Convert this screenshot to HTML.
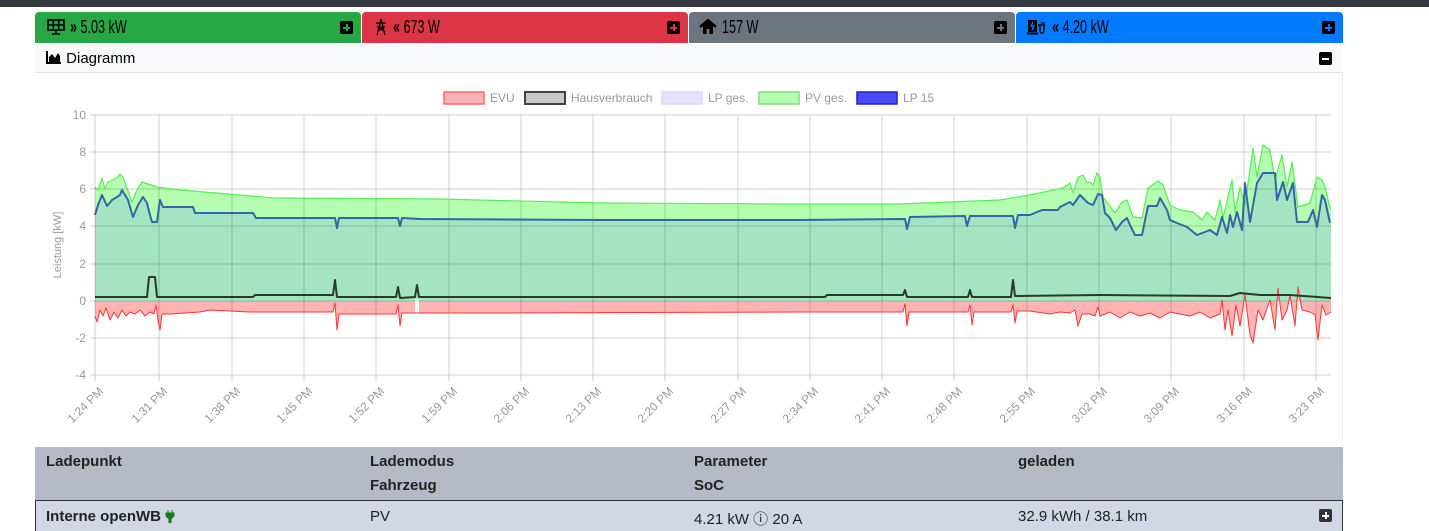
<!DOCTYPE html>
<html><head><meta charset="utf-8"><style>
*{box-sizing:border-box;margin:0;padding:0}
body{width:1429px;height:531px;overflow:hidden;background:#fff;font-family:"Liberation Sans",sans-serif;position:relative}
.top{position:absolute;left:0;top:0;width:1429px;height:7px;background:#343a40}
.btn{position:absolute;top:12px;height:31px;border-radius:4px 4px 0 0;font-size:18px;color:#000;line-height:31px;padding-left:12px}
.btn .tx{display:inline-block;transform:scaleX(0.7);transform-origin:0 50%;white-space:nowrap}
.btn .pl{position:absolute;right:8px;top:9px;width:13px;height:13px;background:#000;border-radius:2px}
.pl:before{content:"";position:absolute;left:3px;top:5.5px;width:7px;height:2px;background:var(--c)}
.pl:after{content:"";position:absolute;left:5.5px;top:3px;width:2px;height:7px;background:var(--c)}
.hdr{position:absolute;left:35px;top:44px;width:1308px;height:29px;background:#f8f9fa;border-bottom:1px solid #dee2e6;font-size:15px;line-height:29px;padding-left:11px}
.card{position:absolute;left:35px;top:73px;width:1308px;height:368px;border-right:1px solid #eee}
.th{position:absolute;left:35px;top:447px;width:1308px;height:53px;background:#b6bac6}
.tr{position:absolute;left:35px;top:500px;width:1308px;height:31px;background:#d1d7e5;border:1px solid #333;border-bottom:none}
.t{position:absolute;font-size:15px;color:#222}
.b{font-weight:bold}
</style></head><body>
<div class="top"></div>
<div class="btn" style="left:35px;width:326px;background:#28a745">
<svg width="18" height="16" viewBox="0 0 18 16" style="vertical-align:-2px"><rect x="1" y="1" width="16" height="10" fill="none" stroke="#000" stroke-width="1.6"/><path d="M1 6H17M6.3 1V11M11.7 1V11M9 11V14M5 15H13" stroke="#000" stroke-width="1.6"/></svg> <span class="tx"><b>»</b> 5.03 kW</span><span class="pl" style="--c:#28a745"></span></div>
<div class="btn" style="left:362px;width:326px;background:#dc3545">
<svg width="14" height="18" viewBox="0 0 14 18" style="vertical-align:-3px"><path d="M7 1L3 17M7 1L11 17M2 5H12M3 9H11M7 1V4M4 13L10 9M10 13L4 9" stroke="#000" stroke-width="1.2" fill="none"/></svg> <span class="tx"><b>«</b> 673 W</span><span class="pl" style="--c:#dc3545"></span></div>
<div class="btn" style="left:689px;width:326px;background:#6c757d;padding-left:10px">
<svg width="18" height="16" viewBox="0 0 18 16" style="vertical-align:-2px"><path d="M1 8L9 1L17 8" stroke="#000" stroke-width="2.4" fill="none"/><path d="M4 6L9 2L14 6V15H10.5V10H7.5V15H4Z" fill="#000"/></svg> <span class="tx">157 W</span><span class="pl" style="--c:#6c757d"></span></div>
<div class="btn" style="left:1016px;width:327px;background:#007bff;padding-left:11px">
<svg width="20" height="16" viewBox="0 0 20 16" style="vertical-align:-2px"><rect x="1" y="1" width="9" height="12" fill="#000"/><rect x="0" y="13.5" width="11" height="2" fill="#000"/><path d="M6 3L4 7H7L5 11" stroke="#007bff" stroke-width="1.4" fill="none"/><path d="M11 6H13V12Q13 14 15 14Q17 14 17 11V6M15 3V6M17 3V6M14 6H18" stroke="#000" stroke-width="1.4" fill="none"/></svg> <span class="tx"><b>«</b> 4.20 kW</span><span class="pl" style="--c:#007bff"></span></div>
<div class="hdr"><svg width="16" height="14" viewBox="0 0 16 14" style="vertical-align:-1px"><path d="M1 1V13H15" stroke="#000" stroke-width="2" fill="none"/><path d="M3 12V7L6 4L9 8L12 3L14 6V12Z" fill="#000"/></svg> Diagramm
<span style="position:absolute;right:11px;top:8px;width:13px;height:13px;background:#000;border-radius:2px"><span style="position:absolute;left:3px;top:5.5px;width:7px;height:2px;background:#fff"></span></span></div>
<div class="card"></div>
<svg style="position:absolute;left:0;top:0" width="1429" height="445" font-family="Liberation Sans, sans-serif">
<g font-size="12" fill="#999">
<rect x="444" y="92" width="40" height="12" fill="#ffb3b3" stroke="#ff6666" stroke-width="1.5"/><text x="490" y="102">EVU</text>
<rect x="525" y="92" width="40" height="12" fill="#c8c8c8" stroke="#444" stroke-width="2"/><text x="571" y="102">Hausverbrauch</text>
<rect x="662" y="92" width="40" height="12" fill="#e3e3fb" stroke="#d8d8f5" stroke-width="1.5"/><text x="708" y="102">LP ges.</text>
<rect x="759" y="92" width="40" height="12" fill="#b5fdb0" stroke="#7be07b" stroke-width="1.5"/><text x="805" y="102">PV ges.</text>
<rect x="857" y="92" width="40" height="12" fill="#4a4af5" stroke="#2020d0" stroke-width="1.5"/><text x="903" y="102">LP 15</text>
</g>
<polygon fill="#b5fdb0" points="95,301 95,187 98,190 102,178 105,189 108,182 117,178 120,174 123,177 132,202 137,190 142,182 157,187 180,190 240,195 273,198 440,199 600,203 800,204 900,204 1000,200 1030,195 1063,188 1070,183 1073,193 1078,177 1083,175 1087,183 1090,182 1093,185 1097,173 1100,177 1103,197 1115,213 1122,202 1127,200 1133,217 1142,218 1148,188 1158,181 1163,185 1170,205 1180,210 1193,212 1202,220 1207,212 1215,220 1220,200 1223,218 1232,180 1235,212 1240,187 1245,205 1253,148 1257,177 1263,145 1270,150 1275,180 1282,155 1287,187 1292,162 1298,207 1310,203 1317,177 1322,180 1325,187 1330,208 1331,208 1331,301"/>
<polygon fill="#a4e4c2" points="95,301 95,215 98,205 102,195 107,206 112,200 120,195 122,190 128,200 133,217 138,205 143,197 147,203 150,215 152,222 157,222 160,200 163,207 193,207 195,213 253,213 256,218 335,218 337,228 339,218 398,218 400,226 402,218 420,219 600,220 800,220 905,219 907,229 910,217 965,216 967,226 970,216 1013,216 1015,228 1018,215 1030,215 1042,210 1058,210 1060,207 1070,202 1073,205 1080,195 1083,198 1088,203 1093,205 1098,194 1102,195 1105,213 1110,218 1116,230 1122,222 1127,218 1130,225 1135,235 1142,235 1148,206 1157,206 1160,198 1167,210 1170,220 1177,223 1187,227 1197,235 1210,230 1217,235 1222,217 1227,233 1230,215 1233,227 1237,212 1242,230 1245,183 1250,222 1257,183 1263,173 1275,173 1277,200 1283,182 1287,200 1293,183 1297,222 1308,222 1313,210 1317,227 1322,195 1325,200 1330,223 1331,223 1331,301"/>
<polygon fill="#ffb3b3" points="95,301 95,316 97,322 100,310 103,316 106,308 110,320 114,312 118,318 122,310 126,316 130,312 135,314 140,310 145,316 150,312 154,314 156,305 158,320 160,330 162,314 170,314 200,312 210,310 250,312 300,312 333,312 335,303 337,330 339,314 396,314 398,305 400,326 402,313 415,313 417,313 500,313 800,312 903,312 905,304 907,326 909,312 968,312 970,305 972,325 974,312 1011,312 1013,305 1015,323 1017,311 1030,311 1050,314 1060,312 1070,313 1075,310 1078,326 1082,314 1090,314 1095,316 1098,307 1100,316 1110,312 1120,318 1130,312 1140,316 1150,313 1160,318 1170,312 1180,314 1190,316 1200,312 1210,318 1220,314 1222,300 1225,330 1228,310 1232,336 1236,305 1240,326 1245,295 1250,335 1253,343 1258,310 1263,320 1270,300 1275,330 1278,288 1282,320 1287,310 1290,295 1295,326 1298,287 1302,310 1310,312 1315,315 1318,340 1322,305 1326,315 1331,312 1331,301"/>
<rect x="415" y="299" width="4" height="16" fill="#fff"/>
<g stroke="rgba(0,0,0,0.18)" stroke-width="1">
<path d="M90 115H1331M90 152H1331M90 189H1331M90 226H1331M90 264H1331M90 301H1331M90 338H1331M90 375H1331"/>
<path d="M95 115V381M159 115V381M232 115V381M304 115V381M376 115V381M449 115V381M521 115V381M593 115V381M665 115V381M738 115V381M810 115V381M882 115V381M954 115V381M1027 115V381M1099 115V381M1171 115V381M1244 115V381M1316 115V381"/>
</g>
<g fill="none" stroke-linejoin="round">
<polyline stroke="#55ee55" stroke-width="1.2" points="95,187 98,190 102,178 105,189 108,182 117,178 120,174 123,177 132,202 137,190 142,182 157,187 180,190 240,195 273,198 440,199 600,203 800,204 900,204 1000,200 1030,195 1063,188 1070,183 1073,193 1078,177 1083,175 1087,183 1090,182 1093,185 1097,173 1100,177 1103,197 1115,213 1122,202 1127,200 1133,217 1142,218 1148,188 1158,181 1163,185 1170,205 1180,210 1193,212 1202,220 1207,212 1215,220 1220,200 1223,218 1232,180 1235,212 1240,187 1245,205 1253,148 1257,177 1263,145 1270,150 1275,180 1282,155 1287,187 1292,162 1298,207 1310,203 1317,177 1322,180 1325,187 1330,208 1331,208"/>
<polyline stroke="#3565a8" stroke-width="2" points="95,215 98,205 102,195 107,206 112,200 120,195 122,190 128,200 133,217 138,205 143,197 147,203 150,215 152,222 157,222 160,200 163,207 193,207 195,213 253,213 256,218 335,218 337,228 339,218 398,218 400,226 402,218 420,219 600,220 800,220 905,219 907,229 910,217 965,216 967,226 970,216 1013,216 1015,228 1018,215 1030,215 1042,210 1058,210 1060,207 1070,202 1073,205 1080,195 1083,198 1088,203 1093,205 1098,194 1102,195 1105,213 1110,218 1116,230 1122,222 1127,218 1130,225 1135,235 1142,235 1148,206 1157,206 1160,198 1167,210 1170,220 1177,223 1187,227 1197,235 1210,230 1217,235 1222,217 1227,233 1230,215 1233,227 1237,212 1242,230 1245,183 1250,222 1257,183 1263,173 1275,173 1277,200 1283,182 1287,200 1293,183 1297,222 1308,222 1313,210 1317,227 1322,195 1325,200 1330,223"/>
<polyline stroke="#ff3333" stroke-width="1" points="95,316 97,322 100,310 103,316 106,308 110,320 114,312 118,318 122,310 126,316 130,312 135,314 140,310 145,316 150,312 154,314 156,305 158,320 160,330 162,314 170,314 200,312 210,310 250,312 300,312 333,312 335,303 337,330 339,314 396,314 398,305 400,326 402,313 415,313 417,313 500,313 800,312 903,312 905,304 907,326 909,312 968,312 970,305 972,325 974,312 1011,312 1013,305 1015,323 1017,311 1030,311 1050,314 1060,312 1070,313 1075,310 1078,326 1082,314 1090,314 1095,316 1098,307 1100,316 1110,312 1120,318 1130,312 1140,316 1150,313 1160,318 1170,312 1180,314 1190,316 1200,312 1210,318 1220,314 1222,300 1225,330 1228,310 1232,336 1236,305 1240,326 1245,295 1250,335 1253,343 1258,310 1263,320 1270,300 1275,330 1278,288 1282,320 1287,310 1290,295 1295,326 1298,287 1302,310 1310,312 1315,315 1318,340 1322,305 1326,315 1331,312"/>
<polyline stroke="#2a3a2a" stroke-width="2" points="95,297 147,297 149,277 155,277 157,297 253,297 255,295 333,295 335,280 337,297 396,297 398,287 400,298 415,297 417,285 419,297 825,297 827,295 903,295 905,290 907,297 968,297 970,290 972,297 1011,297 1013,280 1015,296 1100,295 1230,296 1240,293 1260,295 1290,295 1331,298"/>
</g>
<g font-size="12" fill="#999" text-anchor="end">
<text x="86" y="119">10</text><text x="86" y="156">8</text><text x="86" y="193">6</text><text x="86" y="230">4</text><text x="86" y="268">2</text><text x="86" y="305">0</text><text x="86" y="342">-2</text><text x="86" y="379">-4</text>
</g>
<text transform="translate(61,245) rotate(-90)" font-size="11" fill="#999" text-anchor="middle">Leistung [kW]</text>
<g font-size="12" fill="#999" text-anchor="end">
<text transform="translate(104,392) rotate(-45)">1:24 PM</text>
<text transform="translate(168,392) rotate(-45)">1:31 PM</text>
<text transform="translate(241,392) rotate(-45)">1:38 PM</text>
<text transform="translate(313,392) rotate(-45)">1:45 PM</text>
<text transform="translate(385,392) rotate(-45)">1:52 PM</text>
<text transform="translate(458,392) rotate(-45)">1:59 PM</text>
<text transform="translate(530,392) rotate(-45)">2:06 PM</text>
<text transform="translate(602,392) rotate(-45)">2:13 PM</text>
<text transform="translate(674,392) rotate(-45)">2:20 PM</text>
<text transform="translate(747,392) rotate(-45)">2:27 PM</text>
<text transform="translate(819,392) rotate(-45)">2:34 PM</text>
<text transform="translate(891,392) rotate(-45)">2:41 PM</text>
<text transform="translate(963,392) rotate(-45)">2:48 PM</text>
<text transform="translate(1036,392) rotate(-45)">2:55 PM</text>
<text transform="translate(1108,392) rotate(-45)">3:02 PM</text>
<text transform="translate(1180,392) rotate(-45)">3:09 PM</text>
<text transform="translate(1253,392) rotate(-45)">3:16 PM</text>
<text transform="translate(1325,392) rotate(-45)">3:23 PM</text>
</g>
</svg>
<div class="th"></div>
<div class="t b" style="left:46px;top:453px">Ladepunkt</div>
<div class="t b" style="left:370px;top:453px">Lademodus</div>
<div class="t b" style="left:370px;top:477px">Fahrzeug</div>
<div class="t b" style="left:694px;top:453px">Parameter</div>
<div class="t b" style="left:694px;top:477px">SoC</div>
<div class="t b" style="left:1018px;top:453px">geladen</div>
<div class="tr"></div>
<div class="t b" style="left:46px;top:508px">Interne openWB <svg width="10" height="13" viewBox="0 0 10 13" style="vertical-align:-2px"><path d="M3 0V3M7 0V3M1 3H9V6L6 9V13H4V9L1 6Z" fill="#1a7a1a" stroke="#1a7a1a" stroke-width="1"/></svg></div>
<div class="t" style="left:370px;top:508px">PV</div>
<div class="t" style="left:694px;top:508px">4.21 kW ⓘ 20 A</div>
<div class="t" style="left:1018px;top:508px">32.9 kWh / 38.1 km</div>
<span style="position:absolute;left:1319px;top:509px;width:13px;height:13px;background:#333;border-radius:2px"><span style="position:absolute;left:3px;top:5.5px;width:7px;height:2px;background:#fff"></span><span style="position:absolute;left:5.5px;top:3px;width:2px;height:7px;background:#fff"></span></span>
</body></html>
